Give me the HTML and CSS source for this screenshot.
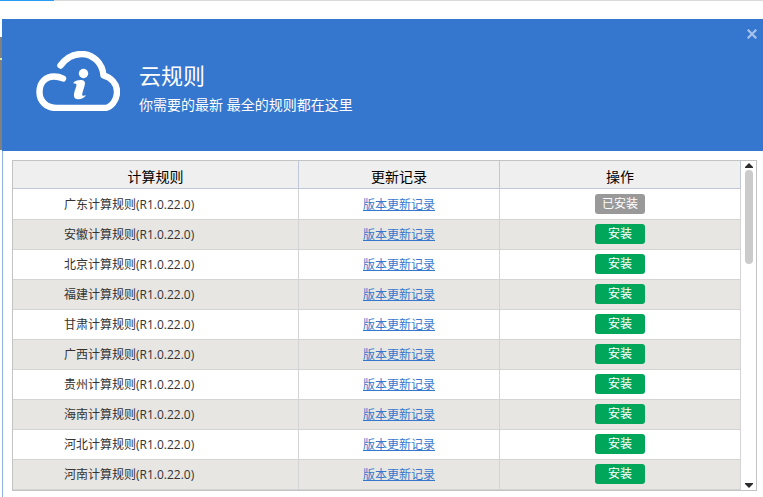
FILE: index.html
```html
<!DOCTYPE html>
<html lang="zh-CN">

<head>
    <meta charset="UTF-8">
    <meta name="viewport" content="width=device-width, initial-scale=1.0">
    <title>云规则</title>
    <link rel="stylesheet" href="styles.css">
</head>

<body>

    <!-- Progress line -->
    <div class="progress"><div class="progress-done"></div></div>

    <div class="page">
        <div class="side-edge"></div>

        <div class="dialog">
            <!-- Header -->
            <div class="header">
                <svg class="logo" width="84" height="60" viewBox="0 0 84 60" fill="none">
                    <path d="M24.500 14.500C30 7 37 3 45.500 3C57 3 66.500 12 67.500 24.500C75 26.500 81 32.500 81 40.500C81 49.500 75 57 68 57H21C10 57 3.500 50 3.500 41C3.500 31 10 25.500 18 25.500C21.500 25.500 24 26 27 27.500" stroke="#fff" stroke-width="6.400" stroke-linecap="round" stroke-linejoin="round" />
                    <circle cx="47.500" cy="22.500" r="4.700" fill="#fff" />
                    <path d="M37.500 31.500C41 28.800 46.500 28.300 48.500 30.500C50 32 47.500 38 46.300 42.500C45.700 44.800 47 45.300 50 44.300C48 47.500 43.500 48.800 40.500 48C36.500 47 38 41.500 39.700 37C41.200 33.200 40.500 32.300 37.500 32.500Z" fill="#fff" />
                </svg>
                <div class="header-text">
                    <h1>云规则</h1>
                    <p>你需要的最新 最全的规则都在这里</p>
                </div>
                <button class="close" type="button" aria-label="关闭">
                    <svg width="10" height="10" viewBox="0 0 10 10">
                        <path d="M0.700 0.700L9.300 9.300M9.300 0.700L0.700 9.300" stroke="#a7c3eb" stroke-width="2.200" />
                    </svg>
                </button>
            </div>

            <!-- Rule list -->
            <div class="list">
                <table class="rules">
                    <thead>
                        <tr>
                            <th class="col-name">计算规则</th>
                            <th class="col-log">更新记录</th>
                            <th>操作</th>
                        </tr>
                    </thead>
                    <tbody>
                        <tr>
                            <td class="name">广东计算规则(R1.0.22.0)</td>
                            <td><a href="#">版本更新记录</a></td>
                            <td><button class="install" type="button" disabled>已安装</button></td>
                        </tr>
                        <tr>
                            <td class="name">安徽计算规则(R1.0.22.0)</td>
                            <td><a href="#">版本更新记录</a></td>
                            <td><button class="install" type="button">安装</button></td>
                        </tr>
                        <tr>
                            <td class="name">北京计算规则(R1.0.22.0)</td>
                            <td><a href="#">版本更新记录</a></td>
                            <td><button class="install" type="button">安装</button></td>
                        </tr>
                        <tr>
                            <td class="name">福建计算规则(R1.0.22.0)</td>
                            <td><a href="#">版本更新记录</a></td>
                            <td><button class="install" type="button">安装</button></td>
                        </tr>
                        <tr>
                            <td class="name">甘肃计算规则(R1.0.22.0)</td>
                            <td><a href="#">版本更新记录</a></td>
                            <td><button class="install" type="button">安装</button></td>
                        </tr>
                        <tr>
                            <td class="name">广西计算规则(R1.0.22.0)</td>
                            <td><a href="#">版本更新记录</a></td>
                            <td><button class="install" type="button">安装</button></td>
                        </tr>
                        <tr>
                            <td class="name">贵州计算规则(R1.0.22.0)</td>
                            <td><a href="#">版本更新记录</a></td>
                            <td><button class="install" type="button">安装</button></td>
                        </tr>
                        <tr>
                            <td class="name">海南计算规则(R1.0.22.0)</td>
                            <td><a href="#">版本更新记录</a></td>
                            <td><button class="install" type="button">安装</button></td>
                        </tr>
                        <tr>
                            <td class="name">河北计算规则(R1.0.22.0)</td>
                            <td><a href="#">版本更新记录</a></td>
                            <td><button class="install" type="button">安装</button></td>
                        </tr>
                        <tr>
                            <td class="name">河南计算规则(R1.0.22.0)</td>
                            <td><a href="#">版本更新记录</a></td>
                            <td><button class="install" type="button">安装</button></td>
                        </tr>
                    </tbody>
                </table>

                <div class="scrollbar">
                    <svg width="8" height="5" viewBox="0 0 8 5"><path d="M0 5V4L4 0L8 4V5Z" fill="#2d2d30" /></svg>
                    <div class="thumb"></div>
                    <svg width="8" height="5" viewBox="0 0 8 5"><path d="M0 0V1L4 5L8 1V0Z" fill="#2d2d30" /></svg>
                </div>
            </div>
        </div>
    </div>

</body>

</html>
```

FILE: styles.css
```css
* {
    box-sizing: border-box;
}

body {
    margin: 0;
    min-height: 100vh;
    display: flex;
    flex-direction: column;
    background: #fff;
    font-family: "Open Sans", "Noto Sans CJK SC", sans-serif;
    font-size: 12px;
    color: #333;
}

/* Progress line on top of the window */
.progress {
    height: 1px;
    background: #d9d9d9;
}

.progress-done {
    width: 7.1%;
    height: 1px;
    background: #2b9cf5;
}

.page {
    flex: 1;
    display: flex;
    padding-top: 18px;
}

/* Piece of the window behind the dialog */
.side-edge {
    width: 2px;
    height: 113px;
    margin-top: 18px;
    background: linear-gradient(#808080 21px, #e3e89a 21px, #e3e89a 23px, #808080 23px);
}

.dialog {
    flex: 1;
    display: flex;
    flex-direction: column;
}

/* Header */
.header {
    height: 132px;
    display: flex;
    align-items: flex-start;
    padding: 10px 6px 0 34px;
    background: #3577ce;
    color: #fff;
}

.logo {
    margin-top: 22px;
}

.header-text {
    flex: 1;
    margin: 30px 0 0 19px;
}

h1 {
    margin: 0;
    font-size: 22px;
    font-weight: normal;
    line-height: 32px;
}

.header p {
    margin: 4px 0 0;
    font-size: 14px;
    line-height: 20px;
}

.close {
    display: flex;
    padding: 0;
    border: none;
    background: none;
    cursor: pointer;
}

/* Rule list */
.list {
    flex: 1;
    display: flex;
    align-items: flex-start;
    padding: 9px 6px 6px 9px;
    border-left: 1px solid #8fb2e3;
}

.rules {
    flex: 1;
    table-layout: fixed;
    border-collapse: separate;
    border-spacing: 0;
    border: 1px solid #c3c3c3;
    border-right: none;
}

.col-name {
    width: 286px;
}

.col-log {
    width: 201px;
}

th {
    height: 28px;
    padding: 4px 0 0;
    border-right: 1px solid #bfc7d9;
    border-bottom: 1px solid #bfc7d9;
    background: #efefef;
    color: #000;
    font-size: 14px;
    font-weight: normal;
    line-height: 20px;
}

td {
    height: 30px;
    padding: 4px 0 0;
    border-right: 1px solid #d4d4d4;
    border-bottom: 1px solid #d4d4d4;
    text-align: center;
    vertical-align: top;
    line-height: 22px;
}

tbody tr:first-child td {
    height: 31px;
    padding-top: 5px;
}

tbody tr:nth-child(even) {
    background: #e7e6e2;
}

.name {
    padding-left: 51px;
    text-align: left;
}

tbody tr:first-child .name {
    padding-left: 51px;
}

a {
    color: #3577ce;
}

.install {
    display: block;
    width: 50px;
    height: 20px;
    margin: 0 auto;
    padding: 0;
    border: none;
    border-radius: 3px;
    background: #00a65a;
    color: #fff;
    font-family: inherit;
    font-size: 12px;
    line-height: 20px;
    cursor: pointer;
}

.install:disabled {
    background: #999;
    cursor: default;
}

/* Scrollbar */
.scrollbar {
    align-self: stretch;
    width: 16px;
    display: flex;
    flex-direction: column;
    align-items: center;
    padding: 2px 0;
    border: 1px solid #c3c3c3;
    border-left: none;
}

.thumb {
    width: 8px;
    height: 94px;
    margin: 2px 0 auto;
    border-radius: 4px;
    background: #cbcbcb;
}
```
